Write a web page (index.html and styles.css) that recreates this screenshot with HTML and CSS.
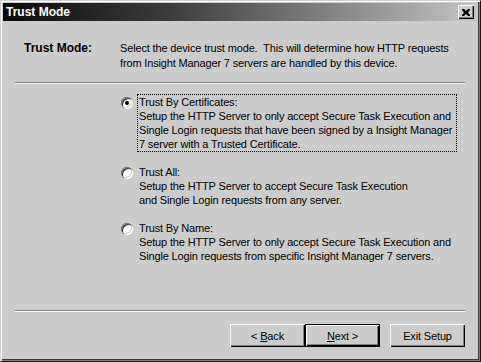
FILE: index.html
```html
<!DOCTYPE html>
<html lang="en">
<head>
    <meta charset="UTF-8">
    <title>Trust Mode</title>
    <link rel="stylesheet" href="styles.css">
</head>
<body>
    <div class="window">
        <div class="titlebar">
            <span class="title">Trust Mode</span>
            <button class="close-btn" aria-label="Close">
                <svg width="8" height="7" viewBox="0 0 8 7">
                    <path d="M0 0h2l2 2 2-2h2v1L6 3.5 8 6v1H6L4 5 2 7H0V6l2-2.5L0 1z" fill="#000"/>
                </svg>
            </button>
        </div>

        <div class="content">
            <!-- Header -->
            <div class="header">
                <div class="header-label">Trust Mode:</div>
                <div class="header-text">Select the device trust mode.&nbsp; This will determine how HTTP requests<br>from Insight Manager 7 servers are handled by this device.</div>
            </div>

            <div class="separator"></div>

            <!-- Options -->
            <div class="options">
                <div class="option">
                    <span class="radio checked"></span>
                    <div class="option-text focused">Trust By Certificates:<br>Setup the HTTP Server to only accept Secure Task Execution and<br>Single Login requests that have been signed by a Insight Manager<br>7 server with a Trusted Certificate.</div>
                </div>
                <div class="option">
                    <span class="radio"></span>
                    <div class="option-text">Trust All:<br>Setup the HTTP Server to accept Secure Task Execution<br>and Single Login requests from any server.</div>
                </div>
                <div class="option">
                    <span class="radio"></span>
                    <div class="option-text">Trust By Name:<br>Setup the HTTP Server to only accept Secure Task Execution and<br>Single Login requests from specific Insight Manager 7 servers.</div>
                </div>
            </div>

            <div class="separator bottom"></div>

            <!-- Buttons -->
            <div class="buttons">
                <button class="btn">&lt; <u>B</u>ack</button>
                <button class="btn default"><u>N</u>ext &gt;</button>
                <button class="btn exit">Exit Setup</button>
            </div>
        </div>
    </div>
</body>
</html>
```

FILE: styles.css
```css
* {
    box-sizing: border-box;
}

html, body {
    margin: 0;
    padding: 0;
    background-color: #000;
}

body {
    font-family: "Liberation Sans", Arial, sans-serif;
    font-size: 11px;
    letter-spacing: -0.15px;
    color: #000;
}

.window {
    width: 481px;
    height: 362px;
    background-color: #cccccc;
    border-top: 1px solid #d0d0d0;
    border-left: 1px solid #d0d0d0;
    border-right: 1px solid #1a1a1a;
    border-bottom: 1px solid #1a1a1a;
    box-shadow: inset 1px 1px 0 #fff, inset -1px -1px 0 #808080, inset -2px -2px 0 #3a3a3a;
    padding: 2px 3px 3px 2px;
    display: flex;
    flex-direction: column;
    overflow: hidden;
}

.titlebar {
    flex-shrink: 0;
    height: 18px;
    background: linear-gradient(to right, #0a0a0a 0%, #3c3c3c 35%, #9a9a9a 80%, #c4c4c4 100%);
    display: flex;
    align-items: center;
    justify-content: space-between;
    padding: 0 3px 0 3px;
}

.title {
    color: #fff;
    font-weight: bold;
    font-size: 12px;
    letter-spacing: 0;
}

.close-btn {
    width: 16px;
    height: 14px;
    padding: 0;
    background-color: #cccccc;
    border: none;
    box-shadow: inset 1px 1px 0 #fff, inset -1px -1px 0 #000, inset -2px -2px 0 #808080;
    display: flex;
    align-items: center;
    justify-content: center;
}

.content {
    flex: 1;
    min-height: 0;
    padding: 0 12px;
    display: flex;
    flex-direction: column;
}

.header {
    display: flex;
    margin-top: 20px;
    line-height: 15px;
    white-space: nowrap;
}

.header-label {
    width: 105px;
    padding-left: 9px;
    font-weight: bold;
    font-size: 12px;
    letter-spacing: 0;
}

.header-text {
    flex: 1;
}

.separator {
    flex-shrink: 0;
    height: 2px;
    border-top: 1px solid #808080;
    border-bottom: 1px solid #fff;
    margin-top: 11px;
}

.options {
    padding-left: 106px;
    margin-top: 10px;
    line-height: 14px;
}

.option {
    display: flex;
    align-items: flex-start;
    margin-bottom: 12px;
}

.radio {
    width: 12px;
    height: 12px;
    margin-top: 3px;
    margin-right: 4px;
    border-radius: 50%;
    background-color: #fff;
    box-shadow: inset 1px 1px 0 #808080, inset 2px 2px 0 #404040, inset -1px -1px 0 #fff, inset -2px -2px 0 #d0d0d0;
    position: relative;
    flex-shrink: 0;
}

.radio.checked::after {
    content: "";
    position: absolute;
    left: 4px;
    top: 4px;
    width: 4px;
    height: 4px;
    border-radius: 50%;
    background-color: #000;
}

.option-text {
    padding: 0 1px;
    border: 1px dotted transparent;
    white-space: nowrap;
}

.option-text.focused {
    border-color: #000;
    width: 320px;
}

.separator.bottom {
    margin-top: auto;
}

.buttons {
    flex-shrink: 0;
    display: flex;
    justify-content: flex-end;
    margin-top: 12px;
    margin-bottom: 11px;
}

.btn {
    width: 75px;
    height: 23px;
    font-family: "Liberation Sans", Arial, sans-serif;
    font-size: 11px;
    letter-spacing: -0.15px;
    background-color: #cccccc;
    border: none;
    padding: 0;
    box-shadow: inset 1px 1px 0 #fff, inset -1px -1px 0 #000, inset -2px -2px 0 #808080;
}

.btn.default {
    box-shadow: inset 0 0 0 1px #000, inset 2px 2px 0 #fff, inset -2px -2px 0 #000, inset -3px -3px 0 #808080;
}

.btn.exit {
    margin-left: 10px;
}
```
